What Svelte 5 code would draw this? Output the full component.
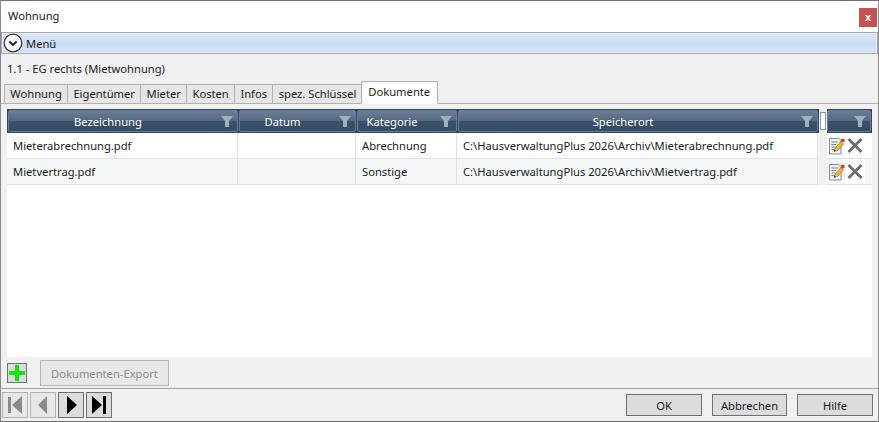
<script>
  const tabs = ['Wohnung', 'Eigentümer', 'Mieter', 'Kosten', 'Infos', 'spez. Schlüssel'];
  const columns = [
    { name: 'Bezeichnung', width: 230 },
    { name: 'Datum', width: 117 },
    { name: 'Kategorie', width: 100 },
    { name: 'Speicherort', width: 360 }
  ];
  const rows = [
    { name: 'Mieterabrechnung.pdf', date: '', category: 'Abrechnung', path: 'C:\\HausverwaltungPlus 2026\\Archiv\\Mieterabrechnung.pdf' },
    { name: 'Mietvertrag.pdf', date: '', category: 'Sonstige', path: 'C:\\HausverwaltungPlus 2026\\Archiv\\Mietvertrag.pdf' }
  ];
</script>

<div class="window">
  <header class="titlebar">
    <span>Wohnung</span>
    <button class="close">x</button>
  </header>

  <div class="menu">
    <span class="chevron">
      <svg width="20" height="20" viewBox="0 0 20 20" fill="none">
        <circle cx="10" cy="10" r="8.8" fill="#f8f8f8" stroke="#333" stroke-width="1.2" />
        <path d="M6.3 8.6 L10 12 L13.7 8.6" stroke="#222" stroke-width="2" />
      </svg>
    </span>
    <span>Menü</span>
  </div>

  <div class="caption">1.1 - EG rechts (Mietwohnung)</div>

  <div class="tabs">
    {#each tabs as tab}
      <div class="tab">{tab}</div>
    {/each}
    <div class="tab active">Dokumente</div>
  </div>

  <div class="content">
    <div class="grid">
      <div class="head">
        {#each columns as col}
          <div class="th" style="width: {col.width}px">
            <span>{col.name}</span>
            <svg class="funnel" width="12" height="11" viewBox="0 0 12 11"><path d="M0 0 H12 L8 5 V11 H4 V5 Z" fill="#a3aebb" /></svg>
          </div>
        {/each}
        <div class="splitter"><i></i></div>
        <div class="th last">
          <svg class="funnel" width="12" height="11" viewBox="0 0 12 11"><path d="M0 0 H12 L8 5 V11 H4 V5 Z" fill="#a3aebb" /></svg>
        </div>
      </div>

      {#each rows as row, i}
        <div class="row" class:alt={i % 2 === 1}>
          <div class="td" style="width: {columns[0].width}px">{row.name}</div>
          <div class="td" style="width: {columns[1].width}px">{row.date}</div>
          <div class="td" style="width: {columns[2].width}px">{row.category}</div>
          <div class="td" style="width: {columns[3].width}px">{row.path}</div>
          <div class="gap"></div>
          <div class="actions">
            <svg width="17" height="18" viewBox="0 0 17 18">
              <path d="M1.5 1.5 H11 L13 3.5 V17 H1.5 Z" fill="#eaf0f8" stroke="#7e8fa3" />
              <path d="M3.5 5 H10 M3.5 7.5 H8 M3.5 10 H7 M3.5 12.5 H6" stroke="#7a8794" />
              <path d="M6 14.5 L7 11 L13 4.5 L15.5 7 L9.5 13.5 Z" fill="#f0b429" stroke="#a8741a" stroke-width="0.7" />
              <path d="M6 14.5 L6.6 12.4 L8 13.8 Z" fill="#333" />
              <circle cx="14.8" cy="3.4" r="2" fill="#e8392b" />
            </svg>
            <span class="remove">
              <svg width="16" height="15" viewBox="0 0 16 15">
                <path d="M1.5 1 L14.5 14 M14.5 1 L1.5 14" stroke="#6d6d6d" stroke-width="2.8" />
              </svg>
            </span>
          </div>
        </div>
      {/each}
    </div>
  </div>

  <div class="docbar">
    <button class="add">
      <svg width="18" height="18" viewBox="0 0 18 18"><path d="M7 1 H11 V7 H17 V11 H11 V17 H7 V11 H1 V7 H7 Z" fill="#0fe60f" /></svg>
    </button>
    <button class="export" disabled>Dokumenten-Export</button>
  </div>

  <footer class="footer">
    <div class="nav">
      <button class="navbtn off">
        <svg width="16" height="18" viewBox="0 0 16 18"><path d="M1 1 H4 V17 H1 Z M15 0 V18 L5 9 Z" fill="#8a8a8a" /></svg>
      </button>
      <button class="navbtn off">
        <svg width="16" height="18" viewBox="0 0 16 18"><path d="M12 0 V18 L3 9 Z" fill="#8a8a8a" /></svg>
      </button>
      <button class="navbtn">
        <svg width="16" height="18" viewBox="0 0 16 18"><path d="M4 0 V18 L14 9 Z" fill="#000" /></svg>
      </button>
      <button class="navbtn">
        <svg width="16" height="18" viewBox="0 0 16 18"><path d="M1 0 V18 L11 9 Z M12 0 H15 V18 H12 Z" fill="#000" /></svg>
      </button>
    </div>
    <div class="dialog-buttons">
      <button class="btn wide">OK</button>
      <button class="btn">Abbrechen</button>
      <button class="btn wide">Hilfe</button>
    </div>
  </footer>
</div>

<style>
  :global(body) {
    margin: 0;
    background: #f0f0f0;
  }

  .window {
    box-sizing: border-box;
    width: 879px;
    height: 422px;
    display: flex;
    flex-direction: column;
    border: 1px solid #8a8a8a;
    border-top-color: #707070;
    border-bottom-color: #707070;
    background: #f0f0f0;
    font-family: "Noto Sans", "Open Sans", sans-serif;
    font-size: 11.2px;
    color: #1a1a1a;
    overflow: hidden;
  }

  button {
    font: inherit;
    padding: 0;
    margin: 0;
    color: inherit;
  }

  .titlebar {
    height: 31px;
    flex: none;
    background: #fff;
    display: flex;
    align-items: center;
    justify-content: space-between;
    padding: 0 1px 2px 7px;
    box-sizing: border-box;
  }

  .close {
    width: 18px;
    height: 19px;
    margin-top: 3px;
    border: none;
    background: #c75050;
    color: #fff;
    font-family: "Liberation Sans", sans-serif;
    font-weight: 700;
    font-size: 11px;
    line-height: 17px;
  }

  .menu {
    height: 20px;
    flex: none;
    display: flex;
    align-items: center;
    gap: 3px;
    padding-left: 1px;
    border: 1px solid #a6a6a6;
    box-shadow: inset 0 0 0 1px #e9eef6;
    background: linear-gradient(#d8e6f8 0%, #c9dcf6 60%, #d6e5f9 88%, #a9c8ee 100%);
  }

  .chevron {
    display: flex;
    width: 20px;
    height: 20px;
  }

  .caption {
    height: 28px;
    flex: none;
    display: flex;
    align-items: center;
    padding-left: 6px;
  }

  .tabs {
    height: 21px;
    flex: none;
    display: flex;
    align-items: flex-end;
    padding-left: 3px;
    border-bottom: 1px solid #b0b0b0;
  }

  .tab {
    box-sizing: border-box;
    height: 20px;
    line-height: 18px;
    padding: 0 5.3px;
    margin-right: -1px;
    margin-bottom: -1px;
    background: #e6e6e6;
    border: 1px solid #b0b0b0;
  }

  .tab.active {
    height: 23px;
    line-height: 20px;
    padding: 0 6.6px;
    margin-left: -1px;
    background: #fff;
    border-bottom-color: #fff;
    position: relative;
  }

  .content {
    flex: 1;
    margin: 5px 6px 0 6px;
    background: #fff;
    min-height: 0;
  }

  .head {
    height: 24px;
    display: flex;
    background: #2f4560;
    padding: 1px 0 1px 1px;
    box-sizing: border-box;
  }

  .th {
    box-sizing: border-box;
    position: relative;
    margin-right: 1px;
    display: flex;
    align-items: center;
    justify-content: center;
    padding-right: 30px;
    color: #fff;
    border: 1px solid #6a7d94;
    border-radius: 2px;
    background: linear-gradient(#6a7e96 0%, #56697f 48%, #3b506b 52%, #364b66 100%);
    flex: none;
  }

  .th.last {
    width: 44px;
    margin-right: 0;
    padding-right: 0;
  }

  .funnel {
    position: absolute;
    right: 4px;
    top: 5px;
  }

  .splitter {
    width: 8px;
    flex: none;
    display: flex;
    justify-content: center;
    background: #f0f0f0;
    margin: -1px 0;
  }

  .splitter i {
    width: 6px;
    margin: 3px 0;
    background: #fff;
    border: 1px solid #8d949c;
    box-sizing: border-box;
  }

  .row {
    height: 26px;
    display: flex;
    box-sizing: border-box;
    padding-left: 1px;
    border-bottom: 1px solid #e0e0e0;
    background: #fff;
  }

  .row.alt {
    background: #f3f7f8;
  }

  .td {
    box-sizing: border-box;
    flex: none;
    display: flex;
    align-items: center;
    padding-left: 5px;
    margin-right: 1px;
    border-right: 1px solid #e0e0e0;
    white-space: nowrap;
  }

  .gap {
    width: 8px;
    flex: none;
    background: #f0f0f0;
    margin-bottom: -1px;
  }

  .actions {
    flex: none;
    width: 44px;
    display: flex;
    align-items: center;
    padding-left: 1px;
    box-sizing: border-box;
  }

  .remove {
    display: flex;
    align-items: center;
    align-self: stretch;
    padding: 0 2px;
  }

  .alt .remove {
    background: #fff;
  }

  .docbar {
    height: 32px;
    flex: none;
    display: flex;
    align-items: flex-start;
    padding: 3px 0 0 6px;
    gap: 13px;
    border-bottom: 1px solid #a0a0a0;
    box-sizing: border-box;
  }

  .add {
    box-sizing: border-box;
    width: 20px;
    height: 20px;
    margin-top: 3px;
    border: 1px solid #707070;
    background: #dcdcdc;
    display: flex;
    align-items: center;
    justify-content: center;
  }

  .export {
    box-sizing: border-box;
    width: 129px;
    height: 26px;
    border: 1px solid #b5b5b5;
    background: #e8e8e8;
    color: #8c8c8c;
  }

  .footer {
    height: 32px;
    flex: none;
    display: flex;
    justify-content: space-between;
    align-items: center;
    padding: 0 5px 0 1px;
  }

  .nav {
    display: flex;
    gap: 2px;
  }

  .navbtn {
    box-sizing: border-box;
    width: 26px;
    height: 26px;
    border: 1px solid #707070;
    background: #dcdcdc;
    display: flex;
    align-items: center;
    justify-content: center;
  }

  .navbtn.off {
    border-color: #b0b0b0;
    background: #e8e8e8;
  }

  .dialog-buttons {
    display: flex;
    gap: 10px;
  }

  .btn {
    box-sizing: border-box;
    width: 75px;
    height: 22px;
    border: 1px solid #707070;
    background: #dcdcdc;
  }

  .btn.wide {
    width: 76px;
  }
</style>
